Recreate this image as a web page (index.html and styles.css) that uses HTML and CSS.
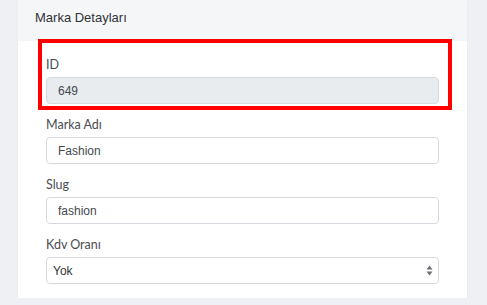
FILE: index.html
```html
<!DOCTYPE html>
<html lang="tr">
<head>
    <meta charset="UTF-8">
    <meta name="viewport" content="width=device-width, initial-scale=1.0">
    <title>Marka Detayları</title>
    <link rel="stylesheet" href="styles.css">
</head>
<body>
    <div class="card">
        <div class="card-header">Marka Detayları</div>
        <div class="card-body">
            <div class="highlight"></div>
            <div class="form-group">
                <label>ID</label>
                <input type="text" value="649" disabled>
            </div>
            <div class="form-group">
                <label>Marka Adı</label>
                <input type="text" value="Fashion">
            </div>
            <div class="form-group">
                <label>Slug</label>
                <input type="text" value="fashion">
            </div>
            <div class="form-group">
                <label>Kdv Oranı</label>
                <div class="select-menu">
                    <select>
                        <option>Yok</option>
                        <option>%1</option>
                        <option>%8</option>
                        <option>%18</option>
                    </select>
                    <svg class="arrows" width="7" height="11" viewBox="0 0 7 11">
                        <path d="M3.5 0.5 L6.5 4.5 L0.5 4.5 Z" fill="#6b7079"/>
                        <path d="M3.5 10.5 L6.5 6.5 L0.5 6.5 Z" fill="#6b7079"/>
                    </svg>
                </div>
            </div>
        </div>
    </div>
</body>
</html>
```

FILE: styles.css
```css
*{
    margin: 0;
    padding: 0;
    box-sizing: border-box;
}
body{
    background: #eef0f4;
    font-family: "Liberation Sans", Arial, sans-serif;
}
.card{
    width: 449px;
    margin: 0 18px;
    background: #fff;
    box-shadow: 0 1px 2px rgba(0, 0, 0, 0.05);
}
.card-header{
    height: 41px;
    padding: 9px 17px 0;
    background: #f5f6f8;
    font-size: 13px;
    line-height: 18px;
    color: #2f3237;
}
.card-body{
    position: relative;
    padding: 16px 28px 14px;
}
.highlight{
    position: absolute;
    top: -2px;
    left: 20px;
    width: 414px;
    height: 71px;
    border: 4px solid #f00;
}
.form-group{
    display: flex;
    flex-direction: column;
    margin-bottom: 13px;
}
.form-group:last-child{
    margin-bottom: 0;
}
.form-group label{
    font-family: Lato, "Noto Sans", sans-serif;
    font-size: 12.5px;
    line-height: 16px;
    color: #4a4d52;
    margin-bottom: 4px;
}
.form-group :where(input, select){
    width: 100%;
    height: 27px;
    border: 1px solid #d6dae0;
    border-radius: 4px;
    outline: none;
    font-family: "Liberation Sans", Arial, sans-serif;
    font-size: 12px;
    color: #45484d;
    background: #fff;
}
.form-group input{
    padding: 0 11px;
}
.form-group input:disabled{
    background: #e9ecef;
    color: #45484d;
}
.select-menu{
    position: relative;
}
.select-menu select{
    appearance: none;
    -webkit-appearance: none;
    padding: 0 6px;
    color: #2f3237;
}
.select-menu .arrows{
    position: absolute;
    right: 6px;
    top: 8px;
    pointer-events: none;
}
```
